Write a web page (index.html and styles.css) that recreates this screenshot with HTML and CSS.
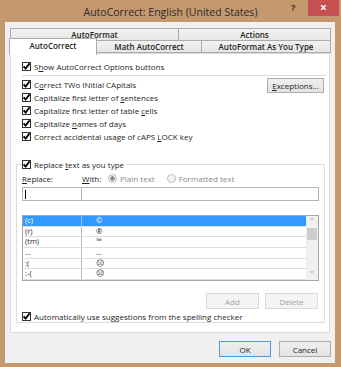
FILE: index.html
```html
<!DOCTYPE html>
<html lang="en">
<head>
  <meta charset="UTF-8">
  <meta name="viewport" content="width=device-width, initial-scale=1.0">
  <title>AutoCorrect: English (United States)</title>
  <link rel="stylesheet" href="styles.css">
</head>
<body>
  <div class="window">
    <header class="titlebar">
      <span class="title-spacer"></span>
      <span class="title">AutoCorrect: English (United States)</span>
      <div class="caption-btns">
        <span class="help">?</span>
        <span class="close">×</span>
      </div>
    </header>

    <div class="client">
      <div class="tab-row tab-row-back">
        <div class="tab tab-autoformat">AutoFormat</div>
        <div class="tab tab-actions">Actions</div>
      </div>
      <div class="tab-row tab-row-front">
        <div class="tab tab-active">AutoCorrect</div>
        <div class="tab tab-math">Math AutoCorrect</div>
        <div class="tab tab-ayt">AutoFormat As You Type</div>
      </div>

      <div class="panel">
        <label class="opt opt-show">
          <span class="cb"><svg viewBox="0 0 9 9"><path d="M1.6 4.4 L3.6 6.6 L7.6 1.4"/></svg></span>
          <span>S<u>h</u>ow AutoCorrect Options buttons</span>
        </label>
        <div class="sep"></div>

        <div class="opts-block">
          <div class="opts-list">
            <label class="opt"><span class="cb"><svg viewBox="0 0 9 9"><path d="M1.6 4.4 L3.6 6.6 L7.6 1.4"/></svg></span><span>C<u>o</u>rrect TWo INitial CApitals</span></label>
            <label class="opt"><span class="cb"><svg viewBox="0 0 9 9"><path d="M1.6 4.4 L3.6 6.6 L7.6 1.4"/></svg></span><span>Capitalize first letter of <u>s</u>entences</span></label>
            <label class="opt"><span class="cb"><svg viewBox="0 0 9 9"><path d="M1.6 4.4 L3.6 6.6 L7.6 1.4"/></svg></span><span>Capitalize first letter of table <u>c</u>ells</span></label>
            <label class="opt"><span class="cb"><svg viewBox="0 0 9 9"><path d="M1.6 4.4 L3.6 6.6 L7.6 1.4"/></svg></span><span>Capitalize <u>n</u>ames of days</span></label>
            <label class="opt"><span class="cb"><svg viewBox="0 0 9 9"><path d="M1.6 4.4 L3.6 6.6 L7.6 1.4"/></svg></span><span>Correct accidental usage of cAPS <u>L</u>OCK key</span></label>
          </div>
          <button class="btn btn-exceptions"><u>E</u>xceptions...</button>
        </div>

        <fieldset class="replace-group">
          <legend class="opt opt-legend">
            <span class="cb"><svg viewBox="0 0 9 9"><path d="M1.6 4.4 L3.6 6.6 L7.6 1.4"/></svg></span>
            <span>Replace <u>t</u>ext as you type</span>
          </legend>

          <div class="field-labels">
            <span class="lbl-replace"><u>R</u>eplace:</span>
            <span class="lbl-with"><u>W</u>ith:</span>
            <span class="radio radio-on"></span>
            <span class="radio-text">Plain text</span>
            <span class="radio"></span>
            <span class="radio-text">Formatted text</span>
          </div>

          <div class="field-inputs">
            <div class="input input-replace"><span class="caret"></span></div>
            <div class="input input-with"></div>
          </div>

          <div class="entry-list">
            <div class="rows">
              <div class="row row-selected"><span class="c1">(c)</span><span class="c2">©</span></div>
              <div class="row"><span class="c1">(r)</span><span class="c2">®</span></div>
              <div class="row"><span class="c1">(tm)</span><span class="c2">™</span></div>
              <div class="row"><span class="c1">...</span><span class="c2">…</span></div>
              <div class="row"><span class="c1">:(</span><span class="c2">☹</span></div>
              <div class="row"><span class="c1">:-(</span><span class="c2">☹</span></div>
            </div>
            <div class="scrollbar">
              <span class="arrow">˄</span>
              <span class="thumb"></span>
              <span class="track"></span>
              <span class="arrow">˅</span>
            </div>
          </div>

          <div class="list-buttons">
            <button class="btn btn-disabled">Add</button>
            <button class="btn btn-disabled">Delete</button>
          </div>

          <label class="opt opt-suggest">
            <span class="cb"><svg viewBox="0 0 9 9"><path d="M1.6 4.4 L3.6 6.6 L7.6 1.4"/></svg></span>
            <span>Automatically use su<u>g</u>gestions from the spelling checker</span>
          </label>
        </fieldset>
      </div>

      <div class="footer">
        <button class="btn btn-default">OK</button>
        <button class="btn">Cancel</button>
      </div>
    </div>
  </div>
</body>
</html>
```

FILE: styles.css
```css
body {
  margin: 0;
  background-color: #c5986d;
  font-family: "Open Sans", "Noto Sans", sans-serif;
  font-size: 8px;
  color: #1e1e1e;
}

u {
  text-decoration-thickness: 1px;
  text-underline-offset: 1px;
}

.window {
  width: 341px;
  height: 367px;
}

/* Title bar */
.titlebar {
  display: flex;
  height: 22px;
}

.title-spacer,
.caption-btns {
  width: 53px;
  flex: none;
}

.title {
  flex: 1;
  text-align: center;
  line-height: 24px;
  font-size: 10.5px;
  color: #2b2b2b;
}

.caption-btns {
  display: flex;
  align-items: flex-start;
}

.help {
  width: 17px;
  padding-left: 3px;
  line-height: 15px;
  font-size: 9px;
  font-weight: bold;
  color: #333;
}

.close {
  width: 31px;
  height: 16px;
  background-color: #c75050;
  color: white;
  text-align: center;
  line-height: 15px;
  font-size: 12px;
  font-weight: bold;
}

/* Client area */
.client {
  margin-left: 5px;
  width: 330px;
  height: 341px;
  box-sizing: border-box;
  padding: 6px 4px 0 5px;
  background-color: #f0f0f0;
}

.tab-row {
  display: flex;
}

.tab {
  box-sizing: border-box;
  border: 1px solid #acacac;
  background: linear-gradient(#f2f2f2, #e6e6e6);
  text-align: center;
  line-height: 11px;
  font-weight: 600;
  white-space: nowrap;
}

.tab-row-back {
  height: 13px;
}

.tab-row-back .tab {
  height: 13px;
}

.tab-autoformat { width: 169px; }
.tab-actions { width: 153px; margin-left: -1px; }

.tab-row-front {
  height: 13px;
  margin-top: -1px;
}

.tab-row-front .tab {
  height: 13px;
}

.tab-row-front .tab-active {
  position: relative;
  z-index: 1;
  width: 88px;
  height: 17px;
  margin: -2px 0 0 -1px;
  border-bottom: none;
  background: white;
  line-height: 13px;
}

.tab-math { width: 106px; margin-left: -1px; }
.tab-ayt { width: 130px; margin-left: -1px; }

/* Tab page */
.panel {
  box-sizing: border-box;
  width: 320px;
  height: 280px;
  border: 1px solid #d9d9d9;
  background-color: white;
}

.opt {
  display: flex;
  align-items: center;
  height: 13px;
  white-space: nowrap;
}

.cb {
  flex: none;
  box-sizing: border-box;
  width: 9px;
  height: 9px;
  margin-right: 3px;
  border: 1px solid #333;
  background-color: white;
}

.cb svg {
  display: block;
  width: 9px;
  height: 9px;
  margin: -1px 0 0 -1px;
}

.cb path {
  fill: none;
  stroke: #000;
  stroke-width: 1.8;
}

.opt-show {
  margin: 6px 0 0 11px;
}

.sep {
  height: 1px;
  margin: 2px 3px 0 11px;
  background-color: #dcdcdc;
}

.opts-block {
  display: flex;
  justify-content: space-between;
  align-items: flex-start;
  margin: 2px 5px 0 11px;
}

/* Buttons */
.btn {
  box-sizing: border-box;
  width: 52px;
  height: 16px;
  padding: 0;
  border: 1px solid #acacac;
  background: linear-gradient(#efefef, #e3e3e3);
  font-family: inherit;
  font-size: 8px;
  color: #1e1e1e;
}

.btn-exceptions {
  width: 57px;
  height: 15px;
}

.btn-disabled {
  width: 53px;
  border-color: #d9d9d9;
  background: #f4f4f4;
  color: #a3a3a3;
}

.btn-default {
  border-color: #4e9ae0;
}

/* Replace group */
.replace-group {
  box-sizing: border-box;
  height: 165px;
  margin: 15px 4px 0 5px;
  padding: 0 5px;
  border: 1px solid #dcdcdc;
}

.opt-legend {
  padding: 0 2px 0 0;
}

.field-labels {
  display: flex;
  align-items: center;
  height: 12px;
  margin-top: 1px;
}

.lbl-replace {
  width: 60px;
}

.lbl-with {
  width: 26px;
}

.radio {
  box-sizing: border-box;
  width: 9px;
  height: 9px;
  margin-right: 3px;
  border: 1px solid #bcbcbc;
  border-radius: 50%;
  background-color: #f4f4f4;
}

.radio-on {
  background: radial-gradient(circle, #8d8d8d 0 2px, #f4f4f4 2.5px);
}

.radio-text {
  margin-right: 12px;
  color: #8a8a8a;
}

.field-inputs {
  display: flex;
  height: 14px;
  margin-top: 3px;
}

.input {
  box-sizing: border-box;
  height: 14px;
  border: 1px solid #b4b4b4;
  background-color: white;
}

.input-replace {
  width: 60px;
}

.input-with {
  flex: 1;
  margin-left: -1px;
}

.caret {
  display: block;
  width: 1px;
  height: 9px;
  margin: 2px 0 0 2px;
  background-color: #000;
}

.entry-list {
  display: flex;
  box-sizing: border-box;
  height: 66px;
  margin-top: 14px;
  border: 1px solid #a6a6a6;
  background-color: white;
  overflow: hidden;
}

.rows {
  flex: 1;
}

.row {
  display: flex;
  box-sizing: border-box;
  height: 10.67px;
  border-bottom: 1px solid #dedede;
  line-height: 9px;
  font-size: 7.5px;
}

.row .c1 {
  box-sizing: border-box;
  width: 59px;
  padding-left: 2px;
  border-right: 1px solid #b8b8b8;
}

.row .c2 {
  padding-left: 14px;
}

.row-selected {
  background-color: #3399ff;
  color: white;
}

.row-selected .c1 {
  border-right-color: #8cc4ff;
}

.scrollbar {
  display: flex;
  flex-direction: column;
  width: 12px;
  background-color: #f0f0f0;
}

.arrow {
  height: 11px;
  text-align: center;
  line-height: 12px;
  font-size: 9px;
  color: #606060;
}

.thumb {
  height: 12px;
  margin: 1px 1px 0 1px;
  background-color: #cdcdcd;
}

.track {
  flex: 1;
}

.list-buttons {
  display: flex;
  justify-content: flex-end;
  gap: 6px;
  margin: 12px 1px 0 0;
}

.opt-suggest {
  height: 12px;
  margin-top: 1px;
}

/* Dialog buttons */
.footer {
  display: flex;
  justify-content: flex-end;
  gap: 8px;
  margin-top: 8px;
}
```
